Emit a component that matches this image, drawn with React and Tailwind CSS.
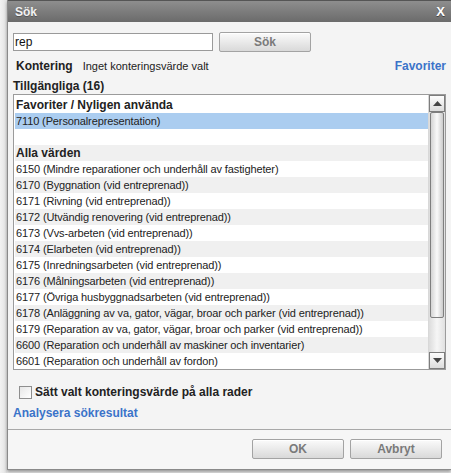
import React, { useState } from 'react';

const rows = [
    { text: 'Favoriter / Nyligen använda', bold: true },
    { text: '7110 (Personalrepresentation)', selected: true },
    { text: '' },
    { text: 'Alla värden', bold: true, gray: true },
    { text: '6150 (Mindre reparationer och underhåll av fastigheter)' },
    { text: '6170 (Byggnation (vid entreprenad))', gray: true },
    { text: '6171 (Rivning (vid entreprenad))' },
    { text: '6172 (Utvändig renovering (vid entreprenad))', gray: true },
    { text: '6173 (Vvs-arbeten (vid entreprenad))' },
    { text: '6174 (Elarbeten (vid entreprenad))', gray: true },
    { text: '6175 (Inredningsarbeten (vid entreprenad))' },
    { text: '6176 (Målningsarbeten (vid entreprenad))', gray: true },
    { text: '6177 (Övriga husbyggnadsarbeten (vid entreprenad))' },
    { text: '6178 (Anläggning av va, gator, vägar, broar och parker (vid entreprenad))', gray: true },
    { text: '6179 (Reparation av va, gator, vägar, broar och parker (vid entreprenad))' },
    { text: '6600 (Reparation och underhåll av maskiner och inventarier)', gray: true },
    { text: '6601 (Reparation och underhåll av fordon)' },
];

const GrayButton = ({ children, className }) => (
    <button
        className={
            'h-[20px] border border-[#a3a3a3] rounded-[2px] bg-gradient-to-b from-[#fbfbfb] to-[#d9d9d9] text-[12px] font-bold text-[#7a7a7a] shadow-[inset_0_1px_0_#ffffff] ' +
            className
        }
    >
        {children}
    </button>
);

const App = () => {
    const [query, setQuery] = useState('rep');
    const [allRows, setAllRows] = useState(false);

    return (
        <div className="w-[451px] h-[473px] flex bg-[#ececec] overflow-hidden font-['Liberation_Sans',Arial,sans-serif] text-[11px] leading-[16px] text-[#222]">
            {/* page behind the dialog */}
            <div className="w-[7px] shrink-0 bg-gradient-to-r from-[#f2f2f2] to-[#e2e2e2]" />

            {/* Dialog */}
            <div className="flex-1 h-[470px] flex flex-col border-l border-b border-[#8a8a8a] bg-[#f4f4f4] shadow-[0_2px_3px_rgba(0,0,0,0.35)]">
                {/* Title bar */}
                <div className="h-[22px] shrink-0 flex items-center justify-between px-[7px] border-t border-[#555] bg-gradient-to-b from-[#8e8e8e] to-[#6b6b6b]">
                    <span className="text-[12px] font-bold text-[#f2f2f2] [text-shadow:0_1px_0_#555]">Sök</span>
                    <span className="text-[13px] font-bold text-white [text-shadow:0_1px_0_#444] mr-[-1px]">X</span>
                </div>

                {/* Body */}
                <div className="flex-1 min-h-0 flex flex-col pl-[5px] pr-[5px]">
                    <div className="flex items-center gap-[6px] mt-[10px]">
                        <input
                            value={query}
                            onChange={(e) => setQuery(e.target.value)}
                            className="w-[200px] h-[18px] border border-[#9a9a9a] bg-white px-[1px] text-[12px] text-[#111] outline-none font-['Liberation_Sans',Arial,sans-serif]"
                        />
                        <GrayButton className="w-[92px]">Sök</GrayButton>
                    </div>

                    <div className="flex items-center h-[16px] mt-[6px] pl-[3px]">
                        <span className="font-bold text-[12px]">Kontering</span>
                        <span className="ml-[10px]">Inget konteringsvärde valt</span>
                        <a href="#" className="ml-auto font-bold text-[#3b73c9] text-[12px]">Favoriter</a>
                    </div>

                    <div className="h-[16px] mt-[4px] flex items-center font-bold text-[12px]">Tillgängliga (16)</div>

                    {/* List */}
                    <div className="w-[433px] h-[276px] shrink-0 border border-[#9b9b9b] bg-white flex">
                        <div className="flex-1 pt-[2px] pl-[1px] overflow-hidden">
                            {rows.map((row, i) => (
                                <div
                                    key={i}
                                    className={
                                        'h-[16px] pl-[1px] flex items-center whitespace-nowrap overflow-hidden ' +
                                        (row.selected ? 'bg-[#abcdf0] ' : row.gray ? 'bg-[#f0f0f0] ' : 'bg-white ') +
                                        (row.bold ? 'font-bold text-[12px]' : 'tracking-[-0.12px]')
                                    }
                                >
                                    {row.text}
                                </div>
                            ))}
                        </div>

                        {/* Scrollbar */}
                        <div className="w-[17px] shrink-0 flex flex-col border-l border-[#d8d8d8] bg-gradient-to-r from-[#dcdcdc] via-[#f6f6f6] to-[#e0e0e0]">
                            <div className="h-[17px] shrink-0 border border-[#7d7d7d] bg-gradient-to-b from-[#fdfdfd] to-[#dcdcdc] flex items-center justify-center">
                                <svg width="9" height="5" viewBox="0 0 9 5"><path d="M0 5 L4.5 0 L9 5 Z" fill="#444" /></svg>
                            </div>
                            <div className="h-[206px] shrink-0 mx-[1px] border border-[#7f7f7f] rounded-[2px] bg-gradient-to-r from-[#d4d4d4] via-[#fafafa] to-[#cccccc]" />
                            <div className="flex-1" />
                            <div className="h-[17px] shrink-0 border border-[#7d7d7d] bg-gradient-to-b from-[#fdfdfd] to-[#dcdcdc] flex items-center justify-center">
                                <svg width="9" height="5" viewBox="0 0 9 5"><path d="M0 0 L9 0 L4.5 5 Z" fill="#444" /></svg>
                            </div>
                        </div>
                    </div>

                    <label className="h-[16px] flex items-center mt-[14px] pl-[6px] gap-[3px] cursor-pointer">
                        <input
                            type="checkbox"
                            checked={allRows}
                            onChange={(e) => setAllRows(e.target.checked)}
                            className="appearance-none w-[13px] h-[13px] border border-[#8e8e8e] bg-gradient-to-br from-[#e6e6e6] to-white checked:bg-[#3b73c9]"
                        />
                        <span className="font-bold text-[12px]">Sätt valt konteringsvärde på alla rader</span>
                    </label>

                    <a href="#" className="h-[16px] mt-[5px] font-bold text-[12px] text-[#3b73c9]">Analysera sökresultat</a>
                </div>

                {/* Footer */}
                <div className="h-[40px] shrink-0 border-t border-[#a8a8a8] bg-[#f6f6f6] flex items-center justify-end gap-[6px] pr-[9px] pb-[2px]">
                    <GrayButton className="w-[92px]">OK</GrayButton>
                    <GrayButton className="w-[92px]">Avbryt</GrayButton>
                </div>
            </div>
        </div>
    );
};

export default App;
